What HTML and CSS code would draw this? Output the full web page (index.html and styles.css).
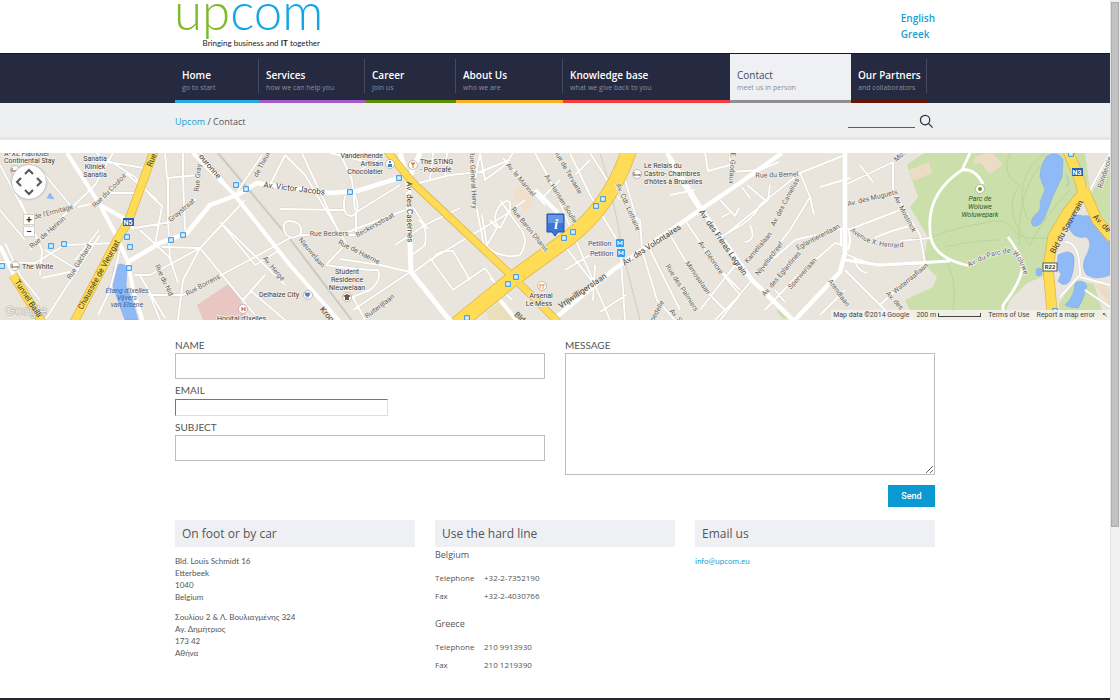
FILE: index.html
```html
<!DOCTYPE html>
<html lang="en">
<head>
<meta charset="utf-8">
<title>Upcom - Contact</title>
<link rel="stylesheet" href="styles.css">
</head>
<body>
<div class="viewport">
<div class="page">
  <header class="header wrap">
    <a class="logo" href="#" aria-label="Upcom home">
      <svg viewBox="0 0 145 53">
        <text class="logo-word" x="-1" y="30"><tspan class="logo-up">up</tspan><tspan class="logo-com">com</tspan></text>
        <text class="logo-tag" x="145" y="46">Bringing business and <tspan class="logo-it">IT</tspan> together</text>
      </svg>
    </a>
    <div class="langs"><a href="#">English</a><a href="#">Greek</a></div>
  </header>

  <nav class="nav">
    <div class="nav-items wrap">
      <a class="item home" href="#"><span class="title">Home</span><span class="sub">go to start</span></a>
      <a class="item services" href="#"><span class="title">Services</span><span class="sub">how we can help you</span></a>
      <a class="item career" href="#"><span class="title">Career</span><span class="sub">join us</span></a>
      <a class="item about" href="#"><span class="title">About Us</span><span class="sub">who we are</span></a>
      <a class="item knowledge" href="#"><span class="title">Knowledge base</span><span class="sub">what we give back to you</span></a>
      <a class="item contact" href="#"><span class="title">Contact</span><span class="sub">meet us in person</span></a>
      <a class="item partners" href="#"><span class="title">Our Partners</span><span class="sub">and collaborators</span></a>
    </div>
  </nav>

  <div class="crumb-bar">
    <div class="crumb-row wrap">
      <div class="crumbs"><a href="#">Upcom</a> / Contact</div>
      <form class="search">
        <input type="text" aria-label="Search">
        <button type="submit" aria-label="Search"><svg viewBox="0 0 16 16"><circle cx="6.500" cy="6.500" r="5"/><path d="M10 10l4.500 4.500"/></svg></button>
      </form>
    </div>
  </div>

  <div class="map">
    <svg class="map-canvas" viewBox="0 153 1110 167" preserveAspectRatio="xMidYMid slice">
      <defs>
        <g id="bus"><rect x="-3" y="-3" width="6" height="6" rx="1" fill="#4ba3ea"/><path d="M-2 .5h4M-1.500-1.500h3v3h-3z" fill="#d9edff" stroke="#d9edff" stroke-width=".6"/></g>
        <g id="poi"><circle r="4.500" fill="#fff" stroke="#a9a39a" stroke-width=".7"/></g>
        <path id="parcwoluwe" d="M969 267Q990 255 1008 253Q1019 253 1026 282"/>
        <path id="henrard" d="M850 231Q872 250 904 247"/>
      </defs>
      <rect x="0" y="153" width="1110" height="167" fill="#e9e5dc"/>
      <!-- parks, hospital and blocks -->
      <g fill="#cadfaa">
        <path d="M907 165L918 157 925 153H1066L1083 193 1067 215 1053 240 1047 275 1027 283 1010 300 1003 320H915L905 300 933 287 937 277 923 263 928 237 910 207 918 197Z"/>
        <path d="M1085 153L1070 153 1090 190Z"/>
        <path d="M1089 198L1110 160V228Z"/>
        <path d="M1059 303L1076 280 1094 284 1105 320H1060Z"/>
        <path d="M777 309l11 10h-5l-6-7z"/>
      </g>
      <path d="M197 305L230 283 240 297 247 320H203Z" fill="#e8c6c2"/>
      <path d="M512 195l8-9 15 12-9 15z" fill="#f1dfcc"/>
      <path d="M909 170l20-8 3 11-19 8zM975 157l16-6 12 14-14 9-8-11-8 2zM1095 285l10-2 5 9v14z" fill="#eddcc5"/>
      <path d="M487 312l15-12 18 20h-31z" fill="#e9dfbb"/>
      <!-- water -->
      <g fill="#8fbaf5" stroke="#79a9ea" stroke-width=".5">
        <path d="M114 267Q121 261 127 267L126 286 133 302 138 320H125L118 301 112 283Z"/>
        <path d="M1047 156Q1058 150 1063 160L1062 177 1053 196 1046 214Q1041 228 1033 226Q1029 221 1035 215Q1042 211 1040 202L1045 190 1040 177Q1040 165 1047 156Z"/>
        <path d="M1067 223Q1074 212 1083 216Q1090 214 1097 222L1110 235V275Q1096 281 1087 275Q1081 268 1085 258Q1094 242 1086 237Q1072 240 1067 223Z"/>
        <path d="M1058 255Q1071 248 1074 257Q1075 270 1070 281Q1064 288 1058 281L1061 274 1057 268Z"/>
        <path d="M1075 283Q1083 278 1087 286L1082 301 1078 308Q1070 308 1065 305Q1075 296 1075 283Z"/>
        <ellipse cx="1039" cy="272" rx="3" ry="4"/>
        <path d="M1066 175q4 5 1 12" fill="none"/>
        <path d="M47 198l3-5 4 6z"/>
      </g>
      <!-- park paths -->
      <g fill="none" stroke="#b9cf9a" stroke-width=".8">
        <path d="M930 238Q955 227 985 223Q1005 215 1015 232Q1020 240 1048 238M945 247Q975 240 1000 240M1010 153Q1000 175 1020 185Q1000 210 1030 245Q1045 215 1070 190M1045 153Q1010 180 1028 220M950 320Q960 290 948 263M1040 165Q1015 200 1020 245"/>
      </g>
      <!-- railway -->
      <path d="M218 153L290 239 353 322" fill="none" stroke="#cbc9c7" stroke-width="2"/>
      <path d="M600 153Q615 200 622 250L640 320" fill="none" stroke="#c9c5bf" stroke-width=".8"/>
      <!-- minor streets: casing, then fill -->
      <g fill="none" stroke-linejoin="round">
        <g stroke="#d8d3c9" stroke-width="2.800"><use href="#minor"/></g>
        <g stroke="#fff" stroke-width="1.900"><path id="minor" d="M0 262L35 263 65 245 116 243M0 165L28 218M20 153L45 175 70 205M113 153L95 185 60 219 30 250M20 200L42 250 40 275M78 207L99 202 127 174 157 200M113 163L135 177 150 195 162 206 155 245M113 163L93 161M113 163L96 153M114 163L144 168M108 193L142 193M165 153L167 178 199 175M183 153V178L185 230M168 178V220L170 260M135 228L170 222 196 199M140 230L170 258 178 283M162 247L200 248 245 200M200 248L150 275 135 275M200 248L255 315M200 248L183 280 178 320M220 222L255 265 280 250M220 222L285 285M148 295L183 295 240 265 290 238M150 295L160 320M139 274L165 318M100 235L45 320M45 250L78 270 42 278M0 210L25 240M5 243L20 275 40 300M99 230L75 260M120 250L110 290 98 315M250 290L285 320M243 300L265 275M235 195L262 155M235 195L201 153M270 185L285 155M285 155L305 175 350 250M340 153L352 180 355 210M330 153L380 165M280 209L345 210M295 222Q282 218 284 230Q288 242 300 235Q304 226 295 222M300 235L356 235M345 196Q341 216 352 216Q362 212 354 192M355 213L400 185M302 153L340 235 405 210M356 235V213M352 175L385 155M326 265L345 245 M326 265Q360 270 378 270Q382 280 370 290L345 300M410 272L380 265 340 259M410 272L353 310M353 297L365 320M395 245L425 225 460 208M418 220Q428 225 425 245L412 255M413 207Q420 219 428 229M415 184L450 175 480 172 510 160M430 180L433 153M445 175L447 153M480 153L473 190 485 250M410 275L430 260 505 215 525 200M513 153L505 165 485 180 480 153M503 158L545 205M535 153L550 180 610 320M485 245Q500 260 520 255Q530 240 520 228L500 200M482 215L487 245 497 228 490 220M500 205Q490 220 500 228M500 205Q512 195 510 210L500 228M430 258L453 290 485 268M433 260Q435 250 453 251L470 280M485 268L500 290 480 300M490 278L512 300M570 153L590 195 620 245 625 320M590 153L620 200M540 200L560 180M575 175L590 160M560 240L595 285 610 320M565 270L595 252M600 312L626 295M595 265L593 300M630 213L640 220 642 250 657 300 675 320M625 180L640 230M668 153L670 165 705 220M670 195L695 190M705 153L708 171 730 165M730 153V172L760 170 779 162M720 200L735 216 739 208M730 213L722 217M742 187L750 198M770 185L768 200 725 235M747 185L765 200M750 225Q757 240 745 242M720 237Q755 220 760 205L800 173 810 197 790 230 755 275M810 197L814 215M800 173L845 155M820 187L850 178M752 280L735 300 715 320M752 280L735 265 728 275M735 265L700 310M685 220L715 265 740 290M670 235L700 285 725 310M650 250L680 310M715 265L740 295 720 320M755 275L795 240 845 228M765 310L795 278 835 243 850 247M785 302L775 290M845 185L893 162M860 165L873 182M893 162V190L920 235 925 263 880 305M848 230L900 210M845 253Q865 265 890 265L930 263M870 240Q890 230 915 225M855 257Q855 270 867 273M900 241L930 238M845 270L895 320M820 315L845 290M1065 242Q1080 242 1080 275L1060 297M1080 277L1110 285M1085 290L1110 307M1110 153L1090 190"/></g>
      </g>
      <!-- main white roads -->
      <g fill="none" stroke="#fff" stroke-linejoin="round">
        <path d="M67 153L100 205 117 237 128 262 133 290 143 322M100 205L125 219 134 229M0 246L14 275" stroke-width="4"/>
        <path d="M128 262L160 243 187 233 210 205 237 195 257 183 282 187 330 193 357 191 402 177" stroke-width="4.500"/>
        <path d="M193 153L233 193 290 265 340 322" stroke-width="4"/>
        <path d="M400 153L408 180 411 272 451 322M409 178L420 153" stroke-width="5"/>
        <path d="M553 320L613 270 700 210 740 183 782 153" stroke-width="4.500"/>
        <path d="M667 153L703 212 752 280 794 321 840 272 845 253V153" stroke-width="4.500"/>
        <path d="M558 213L535 190M500 300L518 322" stroke-width="4"/>
        <path d="M970 153L962 170Q927 193 930 230Q930 258 970 266M962 170Q975 168 983 184M1008 237Q1025 260 1022 270Q1019 285 1003 305V320M845 260L880 265 950 261" stroke-width="2.800"/>
        <path d="M841 228V246M848 228Q852 240 848 250" stroke-width="2"/>
      </g>
      <!-- yellow roads -->
      <g fill="none" stroke-linejoin="round">
        <g stroke="#ddb64b">
          <path d="M74 322L117 240 128 222 154 151" stroke-width="9"/>
          <path d="M13 275L42 322" stroke-width="9"/>
          <path d="M387 151L413 183 460 227 513 277 558 322" stroke-width="8"/>
          <path d="M457 324L510 281 570 237Q610 206 629 151" stroke-width="16"/>
          <path d="M1053 322L1048 267 1053 237 1067 213 1083 193 1079 178 1068 151M1084 190L1097 220 1112 238" stroke-width="11"/>
        </g>
        <g stroke="#ffdc55">
          <path d="M74 322L117 240 128 222 154 151" stroke-width="7.500"/>
          <path d="M13 275L42 322" stroke-width="7.500"/>
          <path d="M387 151L413 183 460 227 513 277 558 322" stroke-width="6.500"/>
          <path d="M457 324L510 281 570 237Q610 206 629 151" stroke-width="14.500"/>
          <path d="M1053 322L1048 267 1053 237 1067 213 1083 193 1079 178 1068 151M1084 190L1097 220 1112 238" stroke-width="9.500"/>
        </g>
      </g>
      <!-- bus stops -->
      <g>
        <use href="#bus" x="51" y="246"/><use href="#bus" x="64" y="244"/><use href="#bus" x="127" y="237"/><use href="#bus" x="130" y="247"/><use href="#bus" x="129" y="268"/><use href="#bus" x="171" y="240"/><use href="#bus" x="183" y="235"/><use href="#bus" x="236" y="185"/><use href="#bus" x="246" y="189"/><use href="#bus" x="350" y="192"/><use href="#bus" x="399" y="178"/><use href="#bus" x="508" y="284"/><use href="#bus" x="516" y="277"/><use href="#bus" x="467" y="318"/><use href="#bus" x="564" y="238"/><use href="#bus" x="573" y="232"/><use href="#bus" x="596" y="206"/><use href="#bus" x="603" y="199"/><use href="#bus" x="1071" y="154"/><use href="#bus" x="1055" y="311"/><use href="#bus" x="2" y="266"/>
      </g>
      <!-- places -->
      <use href="#poi" x="15" y="170"/><path d="M12 171h6M12 168v4" stroke="#805f4c"/>
      <use href="#poi" x="15" y="266"/><path d="M12 267h6M12 264v4M18 266v2" stroke="#805f4c"/>
      <use href="#poi" x="390" y="164"/><path d="M388 164h4v3h-4zM389 163v-2h2v2" fill="#3f83c9"/>
      <use href="#poi" x="413" y="165"/><path d="M411 163h4l-2 2zM413 164v4" fill="#ef7d22" stroke="#ef7d22"/>
      <use href="#poi" x="637" y="174"/><path d="M634 175h6M634 172v4M640 174v2" stroke="#805f4c"/>
      <use href="#poi" x="308" y="295"/><path d="M305 293h5l-1 3h-3zM306 297h3" fill="#4a83cd" stroke="#4a83cd" stroke-width=".7"/>
      <use href="#poi" x="347" y="297"/><path d="M343 296l4-2 4 2-4 2zM345 297h4v3h-4z" fill="#74553e"/>
      <use href="#poi" x="542" y="286"/><path d="M540 284v5M541 284v2M543 284v5M544 284v2" stroke="#ef7d22" stroke-width=".9"/>
      <use href="#poi" x="243" y="309"/><path d="M242 307v4M245 307v4M242 309h3" stroke="#d84b43"/>
      <use href="#poi" x="980" y="189"/><circle cx="980" cy="189" r="2" fill="#5d9d17"/>
      <g fill="#2e9df2"><rect x="616" y="239" width="8" height="8" rx="1"/><rect x="617" y="249" width="8" height="8" rx="1"/></g>
      <path d="M618 245v-4l2 3 2-3v4M619 255v-4l2 3 2-3v4" stroke="#fff" fill="none"/>
      <g class="shield">
        <rect x="123" y="218" width="11" height="8" fill="#2563b0"/><text x="128" y="225">N5</text>
        <rect x="1072" y="168" width="11" height="8" fill="#2563b0"/><text x="1077" y="175">N3</text>
        <rect x="1043" y="263" width="14" height="8" fill="#fff" stroke="#555"/><text x="1050" y="269" class="dark">R22</text>
      </g>
      <!-- place names -->
      <g class="place">
        <text x="4" y="156">A*XL Flathotel</text><text x="4" y="163">Continental Stay</text>
        <text x="22" y="269">The White</text>
        <text x="259" y="297">Delhaize City</text><text x="217" y="321">Hopital d'Ixelles</text>
        <text x="420" y="164">The STiNG</text><text x="420" y="172">- Poolcafé</text>
        <text x="644" y="168">Le Relais du</text><text x="644" y="176">Castro- Chambres</text><text x="644" y="184">d'hôtes à Bruxelles</text>
        <g text-anchor="end"><text x="383" y="158">Vandenhende</text><text x="383" y="166">Artisan</text><text x="383" y="174">Chocolatier</text></g>
        <g text-anchor="middle">
          <text x="95" y="161">Sanatia</text><text x="95" y="169">Kliniek</text><text x="95" y="177">Sanatia</text>
          <text x="347" y="274">Student</text><text x="347" y="282">Residence</text><text x="347" y="290">Nieuwelaan</text>
          <text x="541" y="298">Arsenal</text><text x="539" y="306">Le Mess</text>
        </g>
        <g class="metro"><text x="588" y="246">Petillon</text><text x="590" y="256">Petillon</text></g>
        <g class="lake"><text x="127" y="293">Étang d'Ixelles</text><text x="127" y="300">Vijvers</text><text x="127" y="307">van Elsene</text></g>
        <g class="park"><text x="980" y="201">Parc de</text><text x="980" y="209">Woluwe</text><text x="980" y="217">Woluwepark</text></g>
      </g>
      <text class="google" x="5" y="315">Google</text>
      <!-- street names -->
      <g class="street">
        <text transform="translate(111 192) rotate(-45)">Rue du Couloir</text>
        <text transform="translate(54 214) rotate(-15)">de l'Ermitage</text>
        <text transform="translate(49 234) rotate(-41)">Rue de Hennin</text>
        <text transform="translate(81 263) rotate(-58)">Rue Gachard</text>
        <text transform="translate(162 281) rotate(65)">Rue du Nid</text>
        <text transform="translate(204 287) rotate(-28)">Rue Borrens</text>
        <text transform="translate(183 212) rotate(-40)">Graystraat</text>
        <text transform="translate(200 178) rotate(-85)">Rue Gray</text>
        <text transform="translate(264 165) rotate(-62)">de Theux</text>
        <text transform="translate(272 270) rotate(50)">Av. Hergé</text>
        <text transform="translate(329 236)">Rue Beckers</text>
        <text transform="translate(376 227) rotate(-29)">Beckersstraat</text>
        <text transform="translate(310 254) rotate(50)">Nieuwelaan</text>
        <text transform="translate(358 254) rotate(27)">Rue de Haerne</text>
        <text transform="translate(381 308) rotate(-37)">Ruiterijlaan</text>
        <text transform="translate(471 180) rotate(87)">Rue Général Henry</text>
        <text transform="translate(519 181) rotate(50)">Av. le Marinel</text>
        <text transform="translate(528 231) rotate(51)">Rue Baron Dhanis</text>
        <text transform="translate(559 200) rotate(58)">Av. Hansen-Soulie</text>
        <text transform="translate(566 173) rotate(60)">Rue de Tervaete</text>
        <text transform="translate(626 208) rotate(66)">Av. Cdt. Lothaire</text>
        <text transform="translate(709 259) rotate(55)">Av. Eléonore</text>
        <text transform="translate(696 279) rotate(55)">Mimosalaan</text>
        <text transform="translate(680 289) rotate(57)">Rue des Palmiers</text>
        <text transform="translate(730 168) rotate(93)">E. Godaux</text>
        <text transform="translate(777 177) rotate(-2)">Rue du Bemel</text>
        <text transform="translate(787 203) rotate(-62)">Av. des Camélias</text>
        <text transform="translate(760 249) rotate(-50)">Kamelialaan</text>
        <text transform="translate(771 260) rotate(-52)">Nijvelsedreef</text>
        <text transform="translate(783 275) rotate(-50)">Av. des Eglantines</text>
        <text transform="translate(819 239) rotate(-28)">Eglantierenlaan</text>
        <text transform="translate(804 275) rotate(-48)">Sperwerlaan</text>
        <text transform="translate(837 294) rotate(54)">Arendlaan</text>
        <text transform="translate(659 312) rotate(-62)">pedelle</text>
        <text transform="translate(674 317) rotate(50)">Av. S</text>
        <text transform="translate(873 200) rotate(-14)">Av. des Muguets</text>
        <text transform="translate(903 215) rotate(62)">Av. Mostinck</text>
        <text transform="translate(912 280) rotate(-40)">Waterraaflaan</text>
        <text transform="translate(893 302) rotate(48)">Av. des</text>
        <text transform="translate(901 158) rotate(-42)">Mo.</text>
        <text transform="translate(1107 173) rotate(-72)">Rondevoie</text>
        <g class="along"><text><textPath href="#parcwoluwe">Av. du Parc de Woluwe</textPath></text><text><textPath href="#henrard">Avenue X. Henrard</textPath></text></g>
      </g>
      <g class="street avenue">
        <text transform="translate(26 300) rotate(57)">Tunnel Bailli</text>
        <text transform="translate(101 276) rotate(-61)">Chaussée de Vleurgat</text>
        <text transform="translate(154 161) rotate(-68)">Rue</text>
        <text transform="translate(208 168) rotate(50)">ouronne</text>
        <text transform="translate(294 191) rotate(7)">Av. Victor Jacobs</text>
        <text transform="translate(407 212) rotate(89)">Av. des Casernes</text>
        <text transform="translate(325 316) rotate(50)">Kroo</text>
        <text transform="translate(518 319) rotate(42)">Bld</text>
        <text transform="translate(584 293) rotate(-34)">Vrijwilligerslaan</text>
        <text transform="translate(653 247) rotate(-33)">Av. des Volontaires</text>
        <text transform="translate(721 244) rotate(55)">Av. des Frères Legrain</text>
        <text transform="translate(1069 228) rotate(-61)">Bld du Souverain</text>
        <text transform="translate(1100 225) rotate(46)">Av. de</text>
      </g>
      <!-- info marker -->
      <path d="M547 214h17v18h-6l-3 4-3-4h-5z" fill="#3b75d8" stroke="#214f9f"/>
      <path d="M548 215h15v8h-15z" fill="#6598e8"/>
      <text class="marker" x="556" y="229">i</text>
    </svg>
    <div class="pan">
      <svg viewBox="0 0 34 34"><path d="M13 9l4-4 4 4M13 25l4 4 4-4M9 13l-4 4 4 4M25 13l4 4-4 4"/></svg>
    </div>
    <div class="zoomer"><button type="button" aria-label="Zoom in">+</button><button type="button" aria-label="Zoom out">−</button></div>
    <div class="map-foot">
      <span>Map data ©2014 Google</span>
      <span class="scale">200 m <i></i></span>
      <a href="#">Terms of Use</a>
      <a href="#">Report a map error</a>
      <span class="corner">↖</span>
    </div>
  </div>

  <main class="wrap">
    <form class="form">
      <div class="col">
        <label for="name">NAME</label>
        <input class="box" id="name" type="text">
        <label for="email">EMAIL</label>
        <input class="plain" id="email" type="email">
        <label for="subject">SUBJECT</label>
        <input class="box" id="subject" type="text">
      </div>
      <div class="col">
        <label for="message">MESSAGE</label>
        <textarea class="box" id="message"></textarea>
        <button class="send" type="submit">Send</button>
      </div>
    </form>

    <div class="info">
      <section>
        <h2>On foot or by car</h2>
        <address>Bld. Louis Schmidt 16<br>Etterbeek<br>1040<br>Belgium</address>
        <address>Σουλίου 2 &amp; Λ. Βουλιαγμένης 324<br>Αγ. Δημήτριος<br>173 42<br>Αθήνα</address>
      </section>
      <section>
        <h2>Use the hard line</h2>
        <h3>Belgium</h3>
        <table>
          <tr><th scope="row">Telephone</th><td>+32-2-7352190</td></tr>
          <tr><th scope="row">Fax</th><td>+32-2-4030766</td></tr>
        </table>
        <h3>Greece</h3>
        <table>
          <tr><th scope="row">Telephone</th><td>210 9913930</td></tr>
          <tr><th scope="row">Fax</th><td>210 1219390</td></tr>
        </table>
      </section>
      <section>
        <h2>Email us</h2>
        <a class="mail" href="mailto:info@upcom.eu">info@upcom.eu</a>
      </section>
    </div>
  </main>
  <footer class="footer"></footer>
</div>
<div class="scrollbar"><div class="thumb"></div></div>
</div>
</body>
</html>
```
FILE: styles.css
```css
* { box-sizing: border-box; }
body {
  margin: 0;
  background: #fff;
  color: #555;
  font-family: "Open Sans", "Noto Sans", sans-serif;
  font-size: 9px;
}
a { color: #169fd3; text-decoration: none; }
.viewport { display: flex; min-height: 100vh; }
.page { flex: 1; min-width: 0; display: flex; flex-direction: column; }
.wrap { width: 100%; max-width: 760px; margin: 0 auto; }

.scrollbar { width: 10px; background: #f1f1f1; border-left: 1px solid #e4e4e4; display: flex; flex-direction: column; }
.thumb { width: 8px; height: 75vh; margin: 2px 0; background: #c1c1c1; border: 1px solid #adadad; }

.header { display: flex; justify-content: space-between; }
.logo svg { display: block; width: 145px; height: 53px; overflow: visible; }
.logo-word { font: 300 51px Lato, sans-serif; }
.logo-up { fill: #7fba2c; }
.logo-com { fill: #12a5e8; }
.logo-tag { font: 8px Lato, sans-serif; fill: #222; text-anchor: end; }
.logo-it { font-weight: 700; }
.langs { display: flex; flex-direction: column; padding-top: 10px; font-size: 10px; line-height: 16px; font-weight: 600; }

.nav { background: #262a40; border-top: 1px solid #14182d; }
.nav-items { display: grid; grid-template-columns: 84fr 106fr 91fr 107fr 167fr 121fr 76fr 8fr; }
.item {
  display: flex; flex-direction: column;
  position: relative;
  height: 49px; padding: 14px 0 0 7px;
  border-bottom: 3px solid; color: #fff; white-space: nowrap;
}
.item::after { content: ""; position: absolute; right: 0; top: 5px; height: 34px; border-right: 1px solid #454a60; }
.title { color: #fff; font-size: 10px; line-height: 14px; font-weight: 600; }
.sub { color: #8b8e9c; font-size: 7px; line-height: 11px; }
.home { border-color: #2aa9e0; }
.services { border-color: #a45bc9; }
.career { border-color: #5c8d0a; }
.about { border-color: #f8ae25; }
.knowledge { border-color: #f53b3b; }
.contact { border-color: #8f8f90; background: #eff0f4; }
.contact .title { color: #444a5a; font-weight: 400; }
.contact .sub { color: #8c8c90; }
.partners { border-color: #651408; }
.knowledge::after, .contact::after { display: none; }

.crumb-bar { background: #eeeff1; border-bottom: 3px solid #e4e5e7; }
.crumb-row { display: flex; justify-content: space-between; align-items: center; height: 34px; padding-top: 2px; }
.search { display: flex; align-items: center; gap: 4px; padding-right: 1px; }
.search input { width: 67px; height: 14px; padding: 0; border: 0; border-bottom: 1px solid #555d68; background: none; }
.search button { display: flex; padding: 0; border: 0; background: none; }
.search svg { width: 15px; height: 15px; fill: none; stroke: #2a2e45; stroke-width: 1.3; }

.map { position: relative; height: 167px; margin-top: 13px; overflow: hidden; }
.map-canvas { display: block; width: 100%; height: 100%; font-family: Roboto, sans-serif; }
.place { font-size: 7px; fill: #403c38; stroke: #f5f3ee; stroke-width: 1.5px; paint-order: stroke; }
.metro { fill: #1c5695; }
.lake, .park { font-style: italic; text-anchor: middle; }
.lake { fill: #3c6496; stroke: none; }
.park { fill: #2e5c2c; stroke: #cadfaa; }
.street { font-size: 7px; fill: #67625b; stroke: #f2f0ea; stroke-width: 1.5px; paint-order: stroke; text-anchor: middle; }
.avenue { font-size: 8px; fill: #443c30; stroke: none; }
.along { text-anchor: start; }
.shield { font-size: 7px; font-weight: 700; fill: #fff; text-anchor: middle; }
.shield .dark { font-size: 6px; fill: #333; }
.marker { font: italic 700 15px "Liberation Serif", serif; fill: #fff; text-anchor: middle; }
.google { font: 13px "Liberation Sans", sans-serif; fill: #f0eee9; stroke: #b3afa7; stroke-width: 1px; paint-order: stroke; }
.pan { position: absolute; left: 12px; top: 12px; width: 34px; height: 34px; border-radius: 50%; background: #fdfdfd; box-shadow: 0 0 2px #777; }
.pan svg { display: block; fill: none; stroke: #555; stroke-width: 2; }
.zoomer { position: absolute; left: 23px; top: 61px; display: flex; flex-direction: column; gap: 1px; }
.zoomer button { width: 12px; height: 11px; padding: 0; border: 1px solid #d3d0ca; background: #fff; color: #333; font: 700 10px/9px Roboto, sans-serif; }
.map-foot { position: absolute; right: 0; bottom: 0; display: flex; align-items: center; gap: 7px; height: 10px; padding: 0 2px; background: rgba(245, 243, 239, .85); color: #444; font: 7px/10px Roboto, sans-serif; }
.map-foot a { color: #444; }
.scale { display: flex; align-items: center; gap: 2px; }
.scale i { width: 43px; height: 4px; border: 1px solid #444; border-top: 0; }

.form { display: grid; grid-template-columns: 1fr 1fr; gap: 20px; padding-top: 18px; }
.col { display: flex; flex-direction: column; align-items: flex-start; }
label { font-family: Lato, sans-serif; font-size: 10px; line-height: 15px; }
.box { width: 100%; height: 26px; margin: 0; border: 1px solid #bdbdbd; background: #fff; }
.col .box + label { margin-top: 4px; }
.plain { width: 213px; height: 17px; margin: 1px 0 4px; padding: 0; border: 1px solid #ddd; border-top-color: #777; border-left-color: #777; background: #fff; }
textarea.box { height: 122px; display: block; }
.send { align-self: flex-end; width: 47px; height: 22px; margin-top: 10px; padding: 0; border: 0; background: #0a99d2; color: #fff; font: 500 9px Roboto, sans-serif; }

.info { display: grid; grid-template-columns: repeat(3, 1fr); gap: 20px; padding-top: 13px; }
h2 { margin: 0; padding: 0 7px; background: #eff0f4; font-size: 12px; line-height: 27px; font-weight: 400; }
address { margin: 8px 0 0; font-family: Lato, "Open Sans", sans-serif; font-size: 8px; line-height: 12px; font-style: normal; }
h3 { margin: 0 0 6px; font-size: 9px; line-height: 16px; font-weight: 400; }
table { border-collapse: collapse; margin-bottom: 11px; }
th, td { width: 49px; height: 18px; padding: 0; font-size: 8px; line-height: 10px; font-weight: 400; text-align: left; white-space: nowrap; }
.mail { display: block; margin-top: 8px; font-family: Lato, sans-serif; font-size: 8px; line-height: 12px; }
.footer { height: 2px; margin-top: auto; background: #26272b; }
```
